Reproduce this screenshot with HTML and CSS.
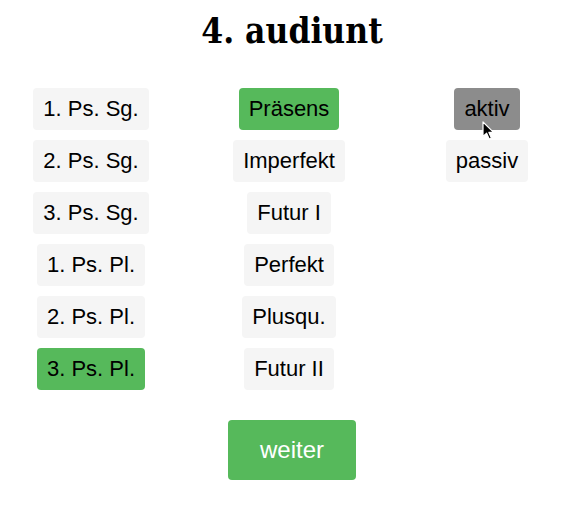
FILE: index.html
```html
<!DOCTYPE html>
<html lang="de">
<head>
<meta charset="utf-8">
<title>4. audiunt</title>
<link rel="stylesheet" href="styles.css">
</head>
<body>
<div class="head">
  <h1 class="title">4. audiunt</h1>
</div>
<div class="grid">
  <div class="col">
    <button class="opt">1. Ps. Sg.</button>
    <button class="opt">2. Ps. Sg.</button>
    <button class="opt">3. Ps. Sg.</button>
    <button class="opt">1. Ps. Pl.</button>
    <button class="opt">2. Ps. Pl.</button>
    <button class="opt sel">3. Ps. Pl.</button>
  </div>
  <div class="col">
    <button class="opt sel">Präsens</button>
    <button class="opt">Imperfekt</button>
    <button class="opt">Futur I</button>
    <button class="opt">Perfekt</button>
    <button class="opt">Plusqu.</button>
    <button class="opt">Futur II</button>
  </div>
  <div class="col">
    <button class="opt hover">aktiv
      <svg class="cursor" width="14" height="20" viewBox="0 0 14 20"><path d="M1 1 L1 15.5 L4.6 12.2 L7.2 18 L9.4 17 L6.9 11.4 L11.6 11.4 Z" fill="#000" stroke="#fff" stroke-width="1.2" stroke-linejoin="round"/></svg>
    </button>
    <button class="opt">passiv</button>
  </div>
</div>
<div class="foot">
  <button class="next">weiter</button>
</div>
</body>
</html>
```
FILE: styles.css
```css
html, body {
  margin: 0;
  padding: 0;
  background: #fff;
}
body {
  width: 568px;
  font-family: "Liberation Sans", Arial, sans-serif;
  color: #000;
}
.head {
  padding-left: 16px;
  text-align: center;
}
.title {
  margin: 0;
  padding-top: 11px;
  font-family: "DejaVu Serif Condensed", "DejaVu Serif", serif;
  font-stretch: condensed;
  font-weight: bold;
  font-size: 35px;
  line-height: 40px;
  height: 52px;
  box-sizing: border-box;
}
.grid {
  display: grid;
  grid-template-columns: repeat(3, 160px);
  column-gap: 38px;
  padding-left: 11px;
  margin-top: 36px;
}
.col {
  display: flex;
  flex-direction: column;
  align-items: center;
  gap: 10px;
}
.opt {
  position: relative;
  border: 0;
  margin: 0;
  background: #f5f5f5;
  border-radius: 4px;
  font-family: "Liberation Sans", Arial, sans-serif;
  font-size: 22px;
  line-height: 26px;
  padding: 8px 10px;
  color: #000;
}
.opt.sel {
  background: #56b95b;
}
.opt.hover {
  background: #8c8c8c;
}
.cursor {
  position: absolute;
  left: 28px;
  top: 33px;
}
.foot {
  padding-left: 16px;
  text-align: center;
  margin-top: 30px;
}
.next {
  border: 0;
  margin: 0;
  background: #56b95b;
  color: #fff;
  border-radius: 4px;
  font-family: "Liberation Sans", Arial, sans-serif;
  font-size: 24px;
  line-height: 28px;
  padding: 16px 32px;
}
```
